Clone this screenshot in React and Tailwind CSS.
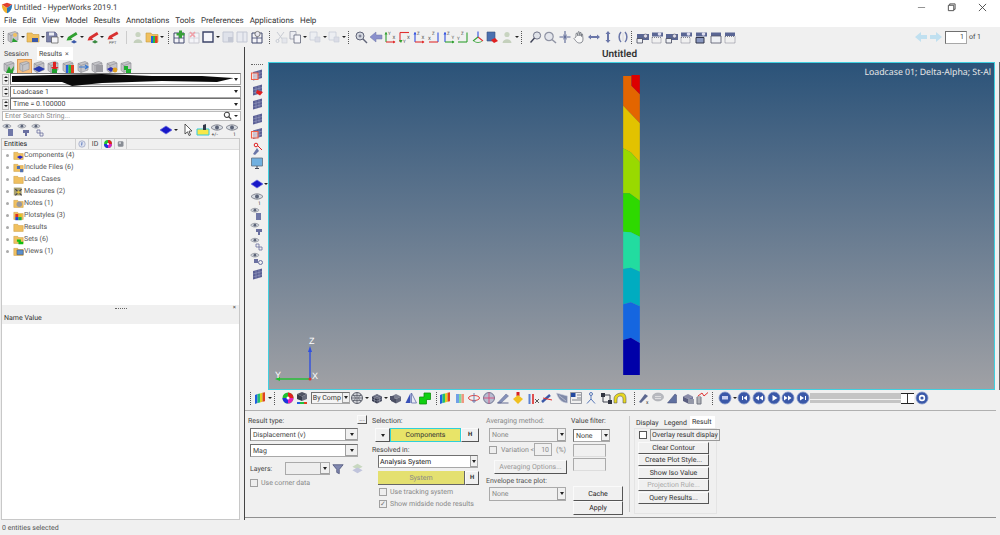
import React from "react";

const dlg = "font-['Roboto',sans-serif] text-[7px] leading-[10px] whitespace-nowrap";

const cube = (a, b, c) => (
    <>
        <path d="M7 3 12 5.5 7 8 2 5.5Z" fill={a} />
        <path d="M2 5.5 7 8V12.5L2 10Z" fill={b} />
        <path d="M12 5.5 7 8V12.5L12 10Z" fill={c} />
    </>
);
const box = (
    <>
        <path d="M2 3.5 9 1.5 12 3V10L5 12.5 2 10.5Z" fill="#c4c4c8" stroke="#8c8c92" strokeWidth=".6" />
        <path d="M5 5.5V12.5M5 5.5 12 3M5 5.5 2 3.5" stroke="#8c8c92" strokeWidth=".6" fill="none" />
    </>
);
const folder = (
    <>
        <path d="M1 3H6L7 4.5H13V12H1Z" fill="#f0c060" stroke="#c89a40" strokeWidth=".6" />
    </>
);
const eye = (
    <>
        <path d="M1 4.5C4 1 10 1 13 4.5 10 8 4 8 1 4.5Z" fill="#d8dce2" stroke="#686c78" strokeWidth=".8" />
        <circle cx="7" cy="4.5" r="2" fill="#5c6478" />
    </>
);
const sheet = (
    <>
        <path d="M3 4 12 1.5V10L3 12.5Z" fill="#5a5f94" />
        <path d="M6 3.2V11.6M9 2.4V10.8M3 7 12 4.6M3 10 12 7.6" stroke="#a2a6c8" strokeWidth=".5" />
    </>
);
const axes = (v, h, l1, l2) => (
    <>
        <path d="M3 12V2.5" stroke={v} strokeWidth="1.1" />
        <path d="M1.5 4.5 3 2 4.5 4.5Z" fill={v} />
        <path d="M3 12H12" stroke={h} strokeWidth="1.1" />
        <path d="M10 10.5 12.5 12 10 13.5Z" fill={h} />
        <text x="5" y="5" fontSize="4.5" fill="#444">{l1}</text>
        <text x="9.5" y="9" fontSize="4.5" fill="#444">{l2}</text>
    </>
);
const disc = (glyph) => (
    <>
        <circle cx="7" cy="7" r="6" fill="#3a58a8" stroke="#8094c8" strokeWidth=".8" />
        {glyph}
    </>
);
const rainbow = (
    <>
        <path d="M2 4 4.5 3V12L2 13Z" fill="#2060e0" />
        <path d="M4.5 3 7 2.4V11.4L4.5 12Z" fill="#20c070" />
        <path d="M7 2.4 9.5 1.8V10.8L7 11.4Z" fill="#e0d020" />
        <path d="M9.5 1.8 12 1.2V10.2L9.5 10.8Z" fill="#e04020" />
    </>
);

const icons = {
    model: <>{box}<path d="M7 8 12 12H6Z" fill="#28a030" /><circle cx="9" cy="5" r="2" fill="#f0c060" /></>,
    folderOpen: <>{folder}<path d="M6 8h6v4H6Z" fill="#3a58a8" /></>,
    save: <><path d="M1.5 2H10L12 4V12H1.5Z" fill="#7a80a8" stroke="#50567c" strokeWidth=".6" /><path d="M4 2.5H9V5.5H4Z" fill="#eceef4" /><path d="M6.5 7H13V13H6.5Z" fill="#f4f4f8" stroke="#555" strokeWidth=".7" /></>,
    green: <><path d="M3 7 11 2 12.5 4.5 6 8.5 7.5 10 1.5 10.5Z" fill="#30a030" /><path d="M6 12 9 10 12 12 9 13.5Z" fill="#3a58a8" /></>,
    red: <><path d="M3 7 11 2 12.5 4.5 6 8.5 7.5 10 1.5 10.5Z" fill="#d83030" /><path d="M6 12 9 10 12 12 9 13.5Z" fill="#3a8a40" /></>,
    ppt: <><path d="M3 6 11 1.5 12.5 4 6 7.5 7.5 9 1.5 9.5Z" fill="#d83030" /><text x="3" y="13.5" fontSize="4" fill="#555">PPT</text></>,
    person: <><circle cx="7" cy="4.5" r="2.6" fill="#c8d4c0" /><path d="M2.5 13C3 8 11 8 11.5 13Z" fill="#c4d0bc" /></>,
    folderRain: <>{folder}<path d="M6 6h2v7H6Z" fill="#2060e0" /><path d="M8 6h2v7H8Z" fill="#20c040" /><path d="M10 6h2.5v7H10Z" fill="#e04020" /></>,
    gridAdd: <><path d="M2 3H12V13H2Z" fill="#f4f4f8" stroke="#40486c" strokeWidth="1" /><path d="M7 3V13M2 8H12" stroke="#40486c" strokeWidth=".8" /><path d="M7 .5H10V3H12.5V5.5H10V8H7V5.5H4.5V3H7Z" fill="#38a038" /></>,
    gridDel: <><path d="M2 3H12V13H2Z" fill="#f4f4f8" stroke="#c8c8d0" strokeWidth="1" /><path d="M7 3V13M2 8H12" stroke="#d0d0d8" strokeWidth=".8" /><path d="M3 2 8 7M8 2 3 7" stroke="#f0a0a8" strokeWidth="1.6" /></>,
    frame: <path d="M2 2H12V12H2Z" fill="#f6f6fa" stroke="#3c4468" strokeWidth="1.4" />,
    gridFade: <><path d="M2 2H12V12H2Z" fill="#dfe2ea" stroke="#c4c8d4" strokeWidth="1" /><path d="M7 7H12V12H7Z" fill="#c4c8d4" /></>,
    gridFade2: <><path d="M2 2H12V12H2Z" fill="#e8eaf0" stroke="#c4c8d4" strokeWidth="1" /><path d="M8 2V12" stroke="#c4c8d4" /></>,
    gridZoom: <><path d="M2 3H12V13H2Z" fill="#f4f4f8" stroke="#40486c" strokeWidth="1" /><path d="M7 3V13M2 8H12" stroke="#40486c" strokeWidth=".8" /><circle cx="7.5" cy="4" r="2.6" fill="#e8e8f0" stroke="#666" strokeWidth=".8" /></>,
    scissors: <><path d="M3 2 9 10M10 2 4 10" stroke="#c8ccd4" strokeWidth="1" /><circle cx="3.5" cy="11" r="1.5" fill="none" stroke="#c8ccd4" /><rect x="8" y="8" width="5" height="5" fill="#e4e6ec" stroke="#c8ccd4" strokeWidth=".6" /></>,
    copy: <><path d="M2 1.5H8V9H2Z" fill="#ecedf2" stroke="#8c90a0" strokeWidth=".7" /><path d="M6 5H12.5V13H6Z" fill="#f4f4f8" stroke="#606478" strokeWidth=".8" /></>,
    copyFade: <><path d="M2 2H9V10H2Z" fill="#eceef2" stroke="#c8ccd8" strokeWidth=".8" /><path d="M7 7H12V12H7Z" fill="#dadce6" stroke="#c8ccd8" strokeWidth=".6" /></>,
    zoomBox: <><circle cx="6" cy="6" r="4" fill="#d4d8e0" stroke="#606478" strokeWidth="1" /><path d="M9 9 13 13" stroke="#606478" strokeWidth="1.5" /><path d="M4.5 6H7.5M6 4.5V7.5" stroke="#50546c" strokeWidth=".8" /></>,
    back: <path d="M7 2V5H13V9H7V12L1 7Z" fill="#8a90cc" stroke="#7078a8" strokeWidth=".5" />,
    axXY: axes("#30a030", "#e03030", "Y", "X"),
    axYX: <><path d="M2 2.5H11" stroke="#e03030" strokeWidth="1.1" /><path d="M2 2.5V12" stroke="#e03030" strokeWidth="1.1" /><path d="M1 10 3 13 4.5 10Z" fill="#30a030" /><text x="9" y="9" fontSize="4.5" fill="#444">X</text><text x="5" y="13" fontSize="4.5" fill="#444">Y</text></>,
    axZX: axes("#3050e0", "#e03030", "Z", "X"),
    axXZ: <><path d="M11 12V2.5" stroke="#3050e0" strokeWidth="1.1" /><path d="M2 12H11" stroke="#e03030" strokeWidth="1.1" /><text x="5" y="5" fontSize="4.5" fill="#444">Z</text><text x="1" y="10" fontSize="4.5" fill="#444">X</text></>,
    axZY: axes("#3050e0", "#30a030", "Z", "Y"),
    axYZ: <><path d="M11 12V2.5" stroke="#30a030" strokeWidth="1.1" /><path d="M2 12H11" stroke="#30a030" strokeWidth="1.1" /><text x="5" y="5" fontSize="4.5" fill="#444">Z</text><text x="1" y="10" fontSize="4.5" fill="#444">Y</text></>,
    axIso: <><path d="M7 7V1.5" stroke="#3050e0" strokeWidth="1.1" /><path d="M7 7 12 11" stroke="#e03030" strokeWidth="1.1" /><path d="M7 7 2 11" stroke="#30a030" strokeWidth="1.1" /><path d="M3 11C5 13 9 13 11 11" stroke="#30a030" fill="none" strokeWidth=".8" /></>,
    viewRed: <><path d="M2 2H10V11H2Z" fill="#4a70b0" stroke="#38507c" strokeWidth=".6" /><path d="M6 10 10 8 13 11 9 13Z" fill="#e02020" /></>,
    zoomDash: <><circle cx="8" cy="5.5" r="3.6" fill="#dfe2e8" stroke="#707488" strokeWidth="1" /><path d="M5.5 8 1.5 12.5" stroke="#404458" strokeWidth="1.4" /></>,
    zoomFit: <><circle cx="6" cy="6.5" r="4.2" fill="#e4e6ec" stroke="#9094a4" strokeWidth="1.2" /><path d="M9 9.5 13 13" stroke="#9094a4" strokeWidth="1.5" /></>,
    cross: <><path d="M7 1V13M1.5 7H12.5" stroke="#5a6694" strokeWidth="1.1" /><path d="M5 4.5C7 6 7 8 5 9.5M9 4.5C7 6 7 8 9 9.5" stroke="#5a6694" fill="none" strokeWidth=".8" /></>,
    hand: <path d="M4 7V3.5L5 3 6 6V2L7 1.5 8 6V2.5L9 2.5 9.5 6.5V4L10.5 4 11 9C11 12 9.5 13 7.5 13 5.5 13 4.5 12 2 8.5L3 7.5Z" fill="#f8f8f8" stroke="#70747c" strokeWidth=".8" />,
    arrowH: <path d="M1 7 4 4.5V6H10V4.5L13 7 10 9.5V8H4V9.5Z" fill="#6a76a8" />,
    arrowV: <path d="M7 1 9.5 4H8V10H9.5L7 13 4.5 10H6V4H4.5Z" fill="#6a76a8" />,
    rotate: <><path d="M5 2C2.5 4.5 2.5 9.5 5 12" fill="none" stroke="#6a76a8" strokeWidth="1.5" /><path d="M9 2C11.5 4.5 11.5 9.5 9 12" fill="none" stroke="#6a76a8" strokeWidth="1.5" /><path d="M7 3V11" stroke="#d8d8e0" /></>,
    cam: <><path d="M1 4H13V10H1Z" fill="#5a6694" /><circle cx="9.5" cy="6" r="2" fill="#dde" stroke="#445" strokeWidth=".5" /><path d="M1 8.5H6.5V13H1Z" fill="#eef0f4" stroke="#404458" strokeWidth=".8" /></>,
    camDash: <><path d="M2 2.5H13V6.5H2Z" fill="#5a6694" /><circle cx="9.5" cy="4" r="1.8" fill="#dde" /><path d="M2 7.5H11V13H2Z" fill="none" stroke="#505468" strokeWidth=".7" strokeDasharray="1 1" /></>,
    camDark: <><path d="M2 2.5H13V6.5H2Z" fill="#5a6694" /><circle cx="9.5" cy="4" r="1.8" fill="#dde" /><path d="M2 7.5H10V13H2Z" fill="#8a98c0" stroke="#303448" strokeWidth="1" /></>,
    clap: <><path d="M2 2.5H12V6H2Z" fill="#5a6694" /><path d="M2 6H12V13H2Z" fill="#eef0f4" stroke="#505468" strokeWidth=".8" /></>,
    clapDash: <><path d="M2 2.5H12V6H2Z" fill="#5a6694" /><path d="M2 6.5H12V13H2Z" fill="none" stroke="#505468" strokeWidth=".7" strokeDasharray="1 1" /></>,
    eyePM: <>{eye}<text x="1.5" y="13" fontSize="5" fill="#333">+/-</text></>,
    eyeOne: <>{eye}<text x="8" y="13" fontSize="5" fill="#333">1</text></>,
    eyeA: <><g transform="scale(.7)">{eye}</g><rect x="6" y="6" width="5" height="7" fill="#7078a8" /></>,
    eyeB: <><g transform="scale(.7)">{eye}</g><path d="M6 7H12V10H10V13H8V10H6Z" fill="#6a70a0" /></>,
    eyeC: <><g transform="scale(.7)">{eye}</g><path d="M6 7H9V10H6ZM9 10H12V13H9Z" fill="none" stroke="#6a70a0" strokeWidth=".8" /></>,
    eyeD: <><g transform="scale(.7)">{eye}</g><rect x="4" y="7" width="4" height="4" fill="#6a70a0" /><circle cx="10.5" cy="10.5" r="2" fill="none" stroke="#6a70a0" /></>,
    blueCube: <path d="M7 3 13 7 7 11 1 7Z" fill="#1818c8" stroke="#6868e0" strokeWidth=".7" />,
    cursor: <path d="M4 1V11L6.5 8.8 8 12.5 9.5 12 8 8.2 11 8Z" fill="#fff" stroke="#333" strokeWidth=".8" />,
    paint: <><path d="M1 6H13V12H1Z" fill="#f8e848" stroke="#30c8e0" strokeWidth="1" /><path d="M7 2 10 1V7H7Z" fill="#303848" /></>,
    info: <><circle cx="7" cy="7" r="4.5" fill="#dfe4f0" stroke="#98a0c0" /><path d="M7 4.5 6.5 9" stroke="#4060b0" strokeWidth="1.2" /></>,
    wheel: <><circle cx="7" cy="7" r="5.5" fill="#20c030" /><path d="M7 7V1.5A5.5 5.5 0 0 1 12.5 7Z" fill="#e02020" /><path d="M7 7H12.5A5.5 5.5 0 0 1 7 12.5Z" fill="#e020c0" /><path d="M7 7V12.5A5.5 5.5 0 0 1 1.5 7Z" fill="#2030e0" /><circle cx="7" cy="7" r="1.5" fill="#fff" /></>,
    grayBall: <><rect x="2.5" y="3" width="8" height="8" rx="2" fill="#888c94" /><rect x="4" y="4" width="3" height="3" fill="#c4c8cc" /></>,
    tFolderBlue: <>{folder}<path d="M5 9 9 7 13 9 9 11.5Z" fill="#2020c8" /></>,
    tFolderFile: <>{folder}<path d="M5 5H9V9H5ZM9 9H13V13H9Z" fill="#5070b0" /></>,
    tFolder: folder,
    tFolderMeas: <><path d="M1 2H11V12H1Z" fill="#a8a070" /><path d="M3 4 11 12M11 4 3 12" stroke="#404050" strokeWidth="1.4" /><circle cx="7" cy="8" r="2" fill="#e0c040" /></>,
    tFolderNote: <>{folder}<circle cx="8" cy="8" r="3.5" fill="#98989c" /></>,
    tFolderPlot: <>{folder}<path d="M3 5H7V9H3Z" fill="#e03020" /><path d="M7 5H11V9H7Z" fill="#e0c020" /><path d="M3 9H7V13H3Z" fill="#2040d0" /><path d="M7 9H11V13H7Z" fill="#20b040" /></>,
    tFolderSet: <>{folder}<path d="M5 7H10V10H13V13H7V10H5Z" fill="#10c010" /></>,
    tFolderView: <>{folder}<path d="M5 5H13V11H5Z" fill="#5a90d0" stroke="#404858" strokeWidth=".6" /></>,
    monitor: <><path d="M1.5 2H12.5V10H1.5Z" fill="#70b0e0" stroke="#607080" strokeWidth=".8" /><path d="M5 12H9V13H5Z" fill="#404858" /><path d="M6.5 10H7.5V12H6.5Z" fill="#404858" /></>,
    sheetRed: <>{sheet}<path d="M7 7 13 9 10 12.5 6 10Z" fill="#e02020" /></>,
    sheetBox: <>{sheet}<path d="M1.5 5H8V11.5H1.5Z" fill="#f8e8e4" fillOpacity=".7" stroke="#f06048" strokeWidth="1.1" /></>,
    sheet,
    jump: <><path d="M3 12 7 6 9 9 5 13Z" fill="#6a76a8" /><circle cx="6" cy="3" r="1.8" fill="none" stroke="#e02020" /><path d="M8 4 12 8" stroke="#e02020" /></>,
    boxGreen: <>{box}<path d="M4 13 7 6 9 10 12 6 11 13Z" fill="#28a030" /></>,
    boxActive: box,
    boxBlue: <>{box}<path d="M7 6 13 9 7 12 1 9Z" fill="#2a3cb0" /></>,
    boxRed: <>{box}<path d="M7 2 10 2 10 7H12.5L8.5 11 5 7H7Z" fill="#e02020" /><path d="M6 9H11V13H6Z" fill="#20a030" /></>,
    boxRain: <>{box}<path d="M5 5H7.5V13H5Z" fill="#2060e0" /><path d="M7.5 5H10V13H7.5Z" fill="#20c040" /><path d="M10 5H13V13H10Z" fill="#e04020" /></>,
    boxFlow: <>{box}<path d="M3 7H12M9 5 12 7 9 9" stroke="#3878d0" fill="none" strokeWidth="1.2" /></>,
    boxGray: <>{box}<path d="M6 5H13V12H6Z" fill="#9c9ca2" /></>,
    boxMix: <>{box}<path d="M2 9 6 7 9 9 6 12Z" fill="#3030b0" /><circle cx="10" cy="10" r="2.4" fill="#e0a020" /></>,
    boxSets: <>{box}<path d="M5 6H9V9H12V13H7V10H5Z" fill="#20b030" /></>,
    rainbow,
    cubeRain: <><path d="M2 3 7 1 12 3 7 5.5Z" fill="#505464" /><path d="M2 3V8L7 10V5.5Z" fill="#383c4c" /><path d="M12 3V8L7 10V5.5Z" fill="#686c7c" /><path d="M2 11H5V13H2Z" fill="#2060e0" /><path d="M5 11H9V13H5Z" fill="#20c040" /><path d="M9 11H12V13H9Z" fill="#e04020" /></>,
    meshBall: <><circle cx="7" cy="7" r="5.5" fill="#d0d2d8" stroke="#404450" strokeWidth=".8" /><path d="M1.5 7H12.5M7 1.5V12.5M3 3.5C6 6 6 8 3 10.5M11 3.5C8 6 8 8 11 10.5M2.5 4.5H11.5M2.5 9.5H11.5" stroke="#404450" strokeWidth=".6" fill="none" /></>,
    meshCube: <>{cube("#606478", "#383c50", "#505468")}<path d="M4.5 4.3 9.5 6.8M9.5 4.3 4.5 6.8M4.5 6.8V11.3M9.5 6.8V11.3M2 7.8 7 10.2 12 7.8" stroke="#b4b8c8" strokeWidth=".4" fill="none" /></>,
    grayCubes: <>{cube("#7a7e90", "#4a4e62", "#62667a")}<path d="M1 5H5V9H1Z" fill="#50546a" /></>,
    halves: <><path d="M6.5 2V12H1.5Z" fill="#3850b8" /><path d="M7.5 2V12H12.5Z" fill="#e8eaf4" stroke="#5060a0" strokeWidth=".7" /></>,
    greenCubes: <path d="M1.5 6H6V2H12.5V8.5H8.5V13H1.5Z" fill="#10d010" stroke="#10900e" strokeWidth=".8" />,
    rainFade: <><path d="M3 3H6V12H3Z" fill="#70a0e8" /><path d="M6 3H8.5V12H6Z" fill="#80dca0" /><path d="M8.5 3H11V12H8.5Z" fill="#f09880" /></>,
    ringRed: <><ellipse cx="7" cy="7" rx="5.5" ry="2.5" fill="none" stroke="#e04040" /><path d="M7 2V12" stroke="#7080b0" /><path d="M5 10H9" stroke="#7080b0" /></>,
    ballGrid: <><circle cx="7" cy="7" r="5.5" fill="#b8bcd0" stroke="#5a6080" strokeWidth=".8" /><path d="M1.5 7H12.5M7 1.5V12.5" stroke="#e04070" strokeWidth=".8" /></>,
    ramp: <><path d="M1.5 12 10 3 12.5 5 5 12Z" fill="#8490b8" stroke="#606890" strokeWidth=".5" /><path d="M1.5 12H12.5" stroke="#606890" /></>,
    hazard: <><path d="M5.5 1H8.5V5H5.5Z" fill="#d82020" /><path d="M2 8 7 4 12 8 7 13Z" fill="#f0c020" /></>,
    bars: <><path d="M2.5 3H4.5V13H2.5Z" fill="#5a80d0" /><path d="M6 3H8V13H6Z" fill="#e05050" /><path d="M9 8 13 12M13 8 9 12" stroke="#333" strokeWidth=".8" /></>,
    cutArrows: <><path d="M2 11 10 4" stroke="#3a58a8" strokeWidth="2.4" /><path d="M3 7 12 9" stroke="#e03030" strokeWidth="1" /></>,
    stripe: <path d="M1.5 2 12.5 5V12C7 12 3 8 1.5 2ZM4 4.5 11 10" fill="#808aa8" stroke="#d0d4e0" strokeWidth=".6" />,
    panelWin: <><path d="M1.5 1.5H12.5V12.5H1.5Z" fill="#f0f0f0" stroke="#707480" strokeWidth=".7" /><path d="M2 2H6.5V6H2Z" fill="#2048a0" /><path d="M8 4H12M8 7H12M3 9H12" stroke="#80848c" /></>,
    stick: <><circle cx="7" cy="3" r="1.5" fill="none" stroke="#5878b8" /><path d="M7 4.5V8L3 12.5M7 8 11 12.5" stroke="#5878b8" fill="none" /></>,
    nodes: <><path d="M4 4H11V11H4Z" fill="none" stroke="#404450" /><rect x="2" y="2" width="4" height="4" fill="#303440" /><rect x="9" y="9" width="4" height="4" fill="#303440" /></>,
    arc: <path d="M1 12V8C1 4 5 2 9 2 12 2 13 5 13 8V12H10V8C10 6 9 5 7 5 5 5 4 7 4 9V12Z" fill="#e8d820" stroke="#404450" strokeWidth=".5" />,
    pen: <><path d="M2 11 8 3 11 5 4 12Z" fill="#5c6890" /><text x="9" y="13" fontSize="5" fill="#333">x</text></>,
    bubble: <><ellipse cx="7" cy="6" rx="5.5" ry="4" fill="#b8bac0" stroke="#9a9ca2" strokeWidth=".5" /><path d="M4 5.5H10M4 7.5H10" stroke="#eee" strokeWidth=".7" /></>,
    shoe: <path d="M1.5 12 9 3 10.5 4 10.5 12Z" fill="#6070a0" stroke="#404870" strokeWidth=".5" />,
    cubeDoc: <>{cube("#8a8ca8", "#5a5e80", "#70749a")}<path d="M7 8H13V13H7Z" fill="#9498a8" /></>,
    trend: <><path d="M2 6H6V13H2Z" fill="none" stroke="#707480" /><path d="M3 7V13M5 7V13" stroke="#707480" /><path d="M3 5 7 2 9 5 13 1.5" stroke="#e03030" fill="none" /></>,
    msg: disc(<path d="M4 5H10V8.5H4Z" fill="#c8d0f0" />),
    first: disc(<path d="M5 5H6V9H5ZM10 4.5V9.5L6.5 7Z" fill="#fff" />),
    prev: disc(<path d="M7 4.5V9.5L3.5 7ZM11 4.5V9.5L7.5 7Z" fill="#fff" />),
    play: disc(<path d="M5.5 4V10L10.5 7Z" fill="#fff" />),
    next: disc(<path d="M7 4.5V9.5L10.5 7ZM3 4.5V9.5L6.5 7Z" fill="#fff" />),
    last: disc(<path d="M9 5H10V9H9ZM4 4.5V9.5L8 7Z" fill="#fff" />),
    gear: disc(<circle cx="7" cy="7" r="2.4" fill="none" stroke="#fff" strokeWidth="1.6" />),
    funnel: <path d="M1 2H13L8.5 7.5V12.5L5.5 11V7.5Z" fill="#8088b0" stroke="#404870" strokeWidth=".8" />,
    layersFade: <><path d="M7 2 12.5 5 7 8 1.5 5Z" fill="#c8d8c0" /><path d="M7 6 12.5 9 7 12 1.5 9Z" fill="#c0c4dc" /></>,
    navL: <path d="M7 2V5H13V9H7V12L1 7Z" fill="#c0e0f0" />,
    navR: <path d="M7 2V5H1V9H7V12L13 7Z" fill="#c0e0f0" />,
};

const Svg = ({ n, className = "w-[14px] h-[14px]" }) => (
    <svg viewBox="0 0 14 14" className={className}>{icons[n]}</svg>
);

const Caret = () => <span className="w-0 h-0 mx-[1px] border-x-[2px] border-x-transparent border-t-[2px] border-t-[#222]" />;

// one toolbar button, a drop arrow is optional
const T = ({ n, a, className = "" }) => (
    <span className={`flex items-center shrink-0 ${className}`}>
        <span className="w-[14.6px] flex justify-center"><Svg n={n} /></span>
        {a && <span className="w-[5px] flex justify-center"><Caret /></span>}
    </span>
);

const Grip = ({ className = "" }) => (
    <span className={`shrink-0 w-[1px] h-[13px] border-l border-dotted border-[#555] ${className}`} />
);

const GripH = () => <span className="w-[12px] h-[1px] border-t border-dotted border-[#666]" />;

const Sunken = ({ className = "", children }) => (
    <div className={`flex items-center bg-white border border-[#a8a8a8] border-t-[#707070] border-l-[#707070] ${className}`}>{children}</div>
);

const DropBtn = ({ className = "" }) => (
    <span className={`ml-auto self-stretch flex items-center justify-center bg-[#f0f0f0] border-l border-b border-[#a0a0a0] ${className}`}>
        <span className="w-0 h-0 border-x-[2.5px] border-x-transparent border-t-[3px] border-t-[#222]" />
    </span>
);

const Raised = ({ className = "", children }) => (
    <div className={`flex items-center justify-center bg-[#f0f0f0] border-t border-l border-[#fafafa] border-r border-b border-r-[#555] border-b-[#555] ${dlg} ${className}`}>{children}</div>
);

const Check = ({ on, dim }) => (
    <span className={`shrink-0 w-[8px] h-[8px] border flex items-center justify-center text-[7px] leading-none ${dim ? "border-[#a0a0a0] bg-[#eee] text-[#777]" : "border-[#555] bg-white text-[#222]"}`}>{on ? "✓" : ""}</span>
);

const Spin = () => (
    <span className="shrink-0 w-[7px] h-[11px] flex flex-col items-center justify-around bg-[#f0f0f0] border border-[#bbb]">
        <span className="w-0 h-0 border-x-[2px] border-x-transparent border-b-[2px] border-b-[#222]" />
        <span className="w-0 h-0 border-x-[2px] border-x-transparent border-t-[2px] border-t-[#222]" />
    </span>
);

const tree = [
    ["tFolderBlue", "Components (4)"],
    ["tFolderFile", "Include Files (6)"],
    ["tFolder", "Load Cases"],
    ["tFolderMeas", "Measures (2)"],
    ["tFolderNote", "Notes (1)"],
    ["tFolderPlot", "Plotstyles (3)"],
    ["tFolder", "Results"],
    ["tFolderSet", "Sets (6)"],
    ["tFolderView", "Views (1)"],
];

const menu = ["File", "Edit", "View", "Model", "Results", "Annotations", "Tools", "Preferences", "Applications", "Help"];

const LeftPanel = () => (
    <div className={`w-[241px] shrink-0 flex flex-col text-[#444] ${dlg}`}>
        <div className="h-[13px] flex items-end pl-[2px]">
            <span className="px-[2px] w-[33px] h-[12px] flex items-center">Session</span>
            <span className="ml-[2px] px-[2px] h-[13px] w-[36px] flex items-center gap-[3px] bg-white">Results <span className="text-[#333]">×</span></span>
        </div>
        <div className="h-[13px] flex items-center pl-[2px]">
            <T n="boxGreen" />
            <span className="flex bg-[#f8c080] border border-[#e09850]"><Svg n="boxActive" className="w-[13px] h-[13px]" /></span>
            <T n="boxBlue" />
            <T n="boxRed" />
            <T n="boxRain" />
            <T n="boxFlow" />
            <T n="boxGray" />
            <T n="boxMix" />
            <T n="boxSets" />
        </div>
        <div className="flex flex-col gap-[0.5px] pl-[2px]">
            <div className="h-[12px] flex items-center gap-[1px] relative">
                <Spin />
                <Sunken className="flex-1 h-[12px]"><DropBtn className="w-[9px] !border-0 bg-white" /></Sunken>
                <svg viewBox="0 0 220 14" className="absolute left-[9px] top-[-1px] w-[222px] h-[14px]">
                    <path d="M0 4 40 3 90 2 140 4 190 4 222 6 205 10 150 9 90 11 60 14 50 10 0 10Z" fill="#0a0a0a" />
                </svg>
            </div>
            <div className="h-[12px] flex items-center gap-[1px]">
                <Spin />
                <Sunken className="flex-1 h-[12px] pl-[2px]">Loadcase 1<DropBtn className="w-[9px] !border-0 bg-white" /></Sunken>
            </div>
            <div className="h-[12px] flex items-center gap-[1px]">
                <Spin />
                <Sunken className="flex-1 h-[12px] pl-[2px]">Time = 0.100000<DropBtn className="w-[9px] !border-0 bg-white" /></Sunken>
            </div>
            <Sunken className="h-[10.5px] pl-[2px] text-[#888] !border-[#bbb]">
                Enter Search String...
                <svg viewBox="0 0 14 14" className="ml-auto w-[9px] h-[9px]"><circle cx="6" cy="6" r="4" fill="none" stroke="#444" strokeWidth="1.6" /><path d="M9 9 13 13" stroke="#444" strokeWidth="2" /></svg>
                <span className="w-[8px] flex justify-center"><Caret /></span>
            </Sunken>
        </div>
        <div className="h-[17px] flex items-center pl-[2px] pr-[2px]">
            <T n="eyeA" /><T n="eyeB" /><T n="eyeC" />
            <T n="blueCube" a className="ml-auto" />
            <T n="cursor" className="ml-[2px]" />
            <T n="paint" />
            <T n="eyePM" />
            <T n="eyeOne" />
        </div>
        <div className="flex-1 flex flex-col border border-[#c8c8c8] mx-[1px] bg-white">
            <div className="h-[11px] flex items-center bg-[#f0f0f0] border-b border-[#ddd]">
                <span className="w-[73px] pl-[2px] text-[#222]">Entities</span>
                <span className="w-[13px] h-full border-l border-[#d0d0d0] flex items-center justify-center"><Svg n="info" className="w-[10px] h-[10px]" /></span>
                <span className="w-[13px] h-full border-l border-[#d0d0d0] flex items-center justify-center">ID</span>
                <span className="w-[13px] h-full border-l border-[#d0d0d0] flex items-center justify-center"><Svg n="wheel" className="w-[10px] h-[10px]" /></span>
                <span className="w-[13px] h-full border-x border-[#d0d0d0] flex items-center justify-center"><Svg n="grayBall" className="w-[10px] h-[10px]" /></span>
            </div>
            <div className="h-[156px] -mt-[1px] flex flex-col">
                {tree.map(([ic, label]) => (
                    <div key={label} className="h-[12px] flex items-center">
                        <span className="w-[3px] h-[3px] ml-[4px] mr-[4px] bg-[#aaa] rounded-full" />
                        <Svg n={ic} className="w-[11px] h-[11px]" />
                        <span className="text-[#555]">{label}</span>
                    </div>
                ))}
            </div>
            <div className="h-[6px] flex items-center justify-center relative bg-[#f0f0f0]">
                <GripH />
                <span className="absolute right-[3px] text-[6px] leading-none">×</span>
            </div>
            <div className="h-[13px] flex items-center pl-[2px] bg-[#f0f0f0] text-[#333]">Name Value</div>
            <div className="flex-1 bg-white" />
        </div>
    </div>
);

const VerticalTools = () => (
    <div className="w-[23px] shrink-0 flex flex-col items-center pt-[2px]">
        <GripH />
        <div className="flex flex-col mt-[3px] gap-[0.5px]">
            <Svg n="sheetBox" />
            <Svg n="sheetRed" />
            <Svg n="sheet" />
            <Svg n="sheet" />
            <Svg n="sheetBox" className="w-[14px] h-[15px]" />
            <Svg n="jump" />
            <Svg n="monitor" />
        </div>
        <div className="mt-[4px] mb-[3px]"><GripH /></div>
        <div className="flex flex-col items-center gap-[1px]">
            <T n="blueCube" a className="ml-[5px]" />
            <Svg n="eyeOne" />
            <Svg n="eyeA" />
            <Svg n="eyeB" />
            <Svg n="eyeC" />
            <Svg n="eyeD" />
            <Svg n="sheet" />
        </div>
    </div>
);

const Beam = () => (
    <svg viewBox="99 30 50 900" className="w-[17px] h-[300px] shrink-0">
        <path d="M99 33H124V62L149 88V175L99 122Z" fill="#e36500" />
        <path d="M124 30H149V88L124 62Z" fill="#dd0000" />
        <path d="M99 122 149 175V292L122 262 99 250Z" fill="#e2c200" />
        <path d="M99 250 122 262 149 292V407L118 385H99Z" fill="#99d900" />
        <path d="M99 385H118L149 407V515L122 502 99 500Z" fill="#2ed900" />
        <path d="M99 500 122 502 149 515V620L122 608 99 612Z" fill="#22dca0" />
        <path d="M99 612 122 608 149 620V724L122 712 99 718Z" fill="#00acc0" />
        <path d="M99 718 122 712 149 724V834L122 818 99 825Z" fill="#1566e0" />
        <path d="M99 825 122 818 149 834V930H99Z" fill="#0000a8" />
    </svg>
);

const Triad = () => (
    <div className="absolute left-[3px] bottom-[4px] w-[46px] h-[48px]">
        <svg viewBox="0 0 46 48" className="absolute inset-0 w-full h-full">
            <path d="M38 42V13" stroke="#3050e0" strokeWidth="1.4" />
            <path d="M36 15 38 9 40 15Z" fill="#3050e0" />
            <path d="M38 42H6" stroke="#20c030" strokeWidth="1.4" />
            <path d="M8 40 3 42 8 44Z" fill="#20c030" />
            <circle cx="38" cy="42" r="1.5" fill="#e03030" />
        </svg>
        <span className="absolute left-[37px] top-[-1px] text-[9px] leading-[10px] text-white font-['Liberation_Sans',sans-serif]">Z</span>
        <span className="absolute left-[3px] top-[33px] text-[9px] leading-[10px] text-white font-['Liberation_Sans',sans-serif]">Y</span>
        <span className="absolute left-[40px] top-[34px] text-[9px] leading-[10px] text-white font-['Liberation_Sans',sans-serif]">X</span>
    </div>
);

const BottomTools = () => (
    <div className="h-[16px] flex items-center pl-[5px]">
        <Grip /><T n="rainbow" a className="ml-[2px]" />
        <Grip className="ml-[1px]" />
        <T n="wheel" className="ml-[6px]" /><T n="cubeRain" className="mr-[1px]" />
        <Sunken className={`w-[39px] h-[12px] pl-[1px] text-[#333] !bg-[#f4f4f4] ${dlg}`}>By Comp<DropBtn className="w-[7px]" /></Sunken>
        <T n="meshBall" a /><T n="meshCube" a /><T n="grayCubes" /><T n="halves" /><T n="greenCubes" />
        <Grip className="ml-[3px] mr-[1px]" />
        <T n="rainbow" /><T n="rainFade" /><T n="ringRed" /><T n="ballGrid" /><T n="ramp" /><T n="hazard" /><T n="bars" /><T n="cutArrows" /><T n="stripe" /><T n="panelWin" /><T n="stick" /><T n="nodes" /><T n="arc" />
        <Grip className="ml-[7px] mr-[1px]" />
        <T n="pen" /><T n="bubble" /><T n="shoe" /><T n="cubeDoc" /><T n="trend" />
        <Grip className="ml-[3px] mr-[4px]" />
        <T n="msg" a /><T n="first" /><T n="prev" /><T n="play" /><T n="next" /><T n="last" />
        <div className="w-[104px] h-[11px] flex flex-col gap-[1px] relative">
            <div className="h-[6px] bg-[#c4c4c4]" />
            <div className="h-[3px] bg-[#c4c4c4]" />
            <div className="absolute right-0 top-0 w-[13px] h-[11px] border-y border-[#222] bg-white">
                <div className="ml-[6px] w-[1px] h-full bg-[#333]" />
            </div>
        </div>
        <T n="gear" className="ml-[1px]" />
    </div>
);

const ResultForm = () => (
    <div className={`flex-1 flex text-[#444] border-y border-y-[#b0b0b0] ${dlg} border-b-[#909090]`}>
        {/* result type */}
        <div className="w-[127px] shrink-0 pl-[3px] pt-[5px] flex flex-col">
            <div className="h-[10px] flex items-center justify-between pr-[5px]">
                <span>Result type:</span>
                <Raised className="w-[10px] h-[9px] -translate-y-[2px]">...</Raised>
            </div>
            <Sunken className="ml-[2px] w-[108px] h-[13px] mt-[2px] pl-[2px]">Displacement (v)<DropBtn className="w-[12px]" /></Sunken>
            <Sunken className="ml-[2px] w-[108px] h-[13px] mt-[3px] pl-[2px]">Mag<DropBtn className="w-[12px]" /></Sunken>
            <div className="flex items-center mt-[5px] h-[13px]">
                <span className="w-[37px] pl-[2px]">Layers:</span>
                <Sunken className="w-[45px] h-[13px] !bg-[#eee] !border-[#aaa]"><DropBtn className="w-[9px]" /></Sunken>
                <Svg n="funnel" className="w-[12px] h-[12px] ml-[2px]" />
                <Svg n="layersFade" className="w-[13px] h-[13px] ml-[7px]" />
            </div>
            <div className="flex items-center gap-[3px] mt-[3px] pl-[2px] text-[#888]"><Check dim />Use corner data</div>
        </div>
        {/* selection */}
        <div className="w-[114px] shrink-0 pt-[5px] flex flex-col">
            <span className="h-[10px]">Selection:</span>
            <div className="flex h-[14px] mt-[2px] ml-[3px] w-[104px]">
                <Raised className="w-[15px]"><span className="w-0 h-0 border-x-[2.5px] border-x-transparent border-t-[3px] border-t-[#222]" /></Raised>
                <div className={`w-[71px] flex items-center justify-center bg-[#e8e468] border border-[#30d0d8] text-[#333] ${dlg}`}>Components</div>
                <Raised className="w-[18px] !text-[6px] font-bold text-[#222]">H</Raised>
            </div>
            <span className="mt-[3px] h-[10px]">Resolved in:</span>
            <Sunken className="ml-[6px] w-[100px] h-[13px] pl-[1px] text-[#222]">Analysis System<DropBtn className="w-[7px]" /></Sunken>
            <div className="flex h-[14px] ml-[6px] mt-[3px] w-[101px]">
                <div className="w-[87px] flex items-center justify-center bg-[#e4e070] border-b border-r border-[#666] text-[#888]">System</div>
                <Raised className="w-[14px] !text-[6px] font-bold text-[#333]">H</Raised>
            </div>
            <div className="flex items-center gap-[3px] ml-[7px] mt-[2px] text-[#888]"><Check dim />Use tracking system</div>
            <div className="flex items-center gap-[3px] ml-[7px] mt-[2px] text-[#888]"><Check dim on />Show midside node results</div>
        </div>
        {/* averaging */}
        <div className="w-[85px] shrink-0 pt-[5px] flex flex-col text-[#888]">
            <span className="h-[10px]">Averaging method:</span>
            <Sunken className="ml-[3px] w-[77px] h-[14px] mt-[2px] pl-[2px] !bg-[#f0f0f0] !border-[#aaa]">None<DropBtn className="w-[8px]" /></Sunken>
            <div className="flex items-center mt-[1px] ml-[3px] h-[13px]">
                <Check dim /><span className="ml-[4px] w-[32px]">Variation &lt;</span>
                <Sunken className="ml-[1px] w-[18px] h-[13px] justify-end pr-[2px] !bg-[#f0f0f0] !border-[#aaa]">10</Sunken>
                <span className="ml-[4px]">(%)</span>
            </div>
            <Raised className="ml-[8px] w-[73px] h-[14px] mt-[4px] !text-[#999]">Averaging Options...</Raised>
            <span className="mt-[2px] h-[10px] text-[#555]">Envelope trace plot:</span>
            <Sunken className="ml-[3px] w-[77px] h-[14px] mt-[1px] pl-[2px] !bg-[#f0f0f0] !border-[#aaa]">None<DropBtn className="w-[8px]" /></Sunken>
        </div>
        {/* value filter */}
        <div className="w-[56px] shrink-0 pt-[5px] flex flex-col">
            <span className="h-[10px]">Value filter:</span>
            <Sunken className="ml-[2px] w-[37px] h-[13px] mt-[3px] pl-[2px]">None<DropBtn className="w-[8px]" /></Sunken>
            <div className="ml-[2px] w-[33px] h-[13px] mt-[2px] border border-[#aaa] border-b-[#ddd]" />
            <div className="ml-[2px] w-[33px] h-[13px] mt-[1px] border border-[#aaa] border-b-[#ddd]" />
            <Raised className="ml-[2px] w-[50px] h-[15px] mt-[15px] !text-[#222]">Cache</Raised>
            <Raised className="ml-[2px] w-[50px] h-[14px] !text-[#222]">Apply</Raised>
        </div>
        {/* tabs */}
        <div className="ml-[2px] w-[1px] my-[5px] bg-[#c8c8c8]" />
        <div className="ml-[4px] w-[83px] pt-[5px] flex flex-col">
            <div className="h-[12px] flex items-end text-[#333]">
                <span className="w-[28px] pl-[2px] h-[11px] flex items-center">Display</span>
                <span className="w-[28px] pl-[2px] h-[11px] flex items-center">Legend</span>
                <span className="w-[25px] pl-[2px] h-[12px] flex items-center bg-white">Result</span>
            </div>
            <div className="h-[86px] border border-[#e4e4e4] pt-[1px] px-[3px] flex flex-col gap-[0.5px]">
                <div className="h-[10px] flex items-center gap-[3px] ml-[1px] text-[#333]">
                    <Check /><span className="border border-[#999] px-[1px]">Overlay result display</span>
                </div>
                <Raised className="w-[71px] h-[12px] mt-[1px] !text-[#333]">Clear Contour</Raised>
                <Raised className="w-[71px] h-[12px] !text-[#333]">Create Plot Style...</Raised>
                <Raised className="w-[71px] h-[12px] !text-[#333]">Show Iso Value</Raised>
                <Raised className="w-[71px] h-[12px] !text-[#aaa]">Projection Rule...</Raised>
                <Raised className="w-[71px] h-[12px] !text-[#333]">Query Results...</Raised>
            </div>
        </div>
    </div>
);

export default function App() {
    return (
        <div className="w-[1000px] h-[535px] flex flex-col bg-[#f0f0f0] overflow-hidden font-['Roboto',sans-serif] [text-rendering:geometricPrecision]">
            <div className="h-[15px] shrink-0 bg-white flex items-center pl-[1px]">
                <svg viewBox="0 0 14 14" className="w-[12px] h-[12px]">
                    <path d="M1 3 7 1 13 3 7 7Z" fill="#e04030" />
                    <path d="M1 3 7 7V13C3 12 1 8 1 3Z" fill="#f0b030" />
                    <path d="M13 3 7 7V13C11 12 13 8 13 3Z" fill="#2878b8" />
                </svg>
                <span className="ml-[1px] text-[8px] leading-[15px] text-[#444]">Untitled - HyperWorks 2019.1</span>
                <div className="ml-auto flex items-center h-full">
                    <svg viewBox="0 0 10 10" className="w-[9px] h-[9px] mr-[21px]"><path d="M1 5H9" stroke="#888" /></svg>
                    <svg viewBox="0 0 10 10" className="w-[9px] h-[9px] mr-[22px]"><path d="M1.5 2.5H7.5V8.5H1.5ZM3 2.5V1H9V7H7.5" fill="none" stroke="#444" /></svg>
                    <svg viewBox="0 0 10 10" className="w-[9px] h-[9px] mr-[13px]"><path d="M1 1 9 9M9 1 1 9" stroke="#444" /></svg>
                </div>
            </div>
            <div className="h-[12px] shrink-0 bg-white flex items-center gap-[6px] pl-[4px] text-[8px] leading-[12px] text-[#333]">
                {menu.map(m => <span key={m}>{m}</span>)}
            </div>
            <div className="h-[20px] shrink-0 flex items-center pl-[3px]">
                <Grip />
                <T n="model" a className="ml-[2px]" />
                <T n="folderOpen" a /><T n="save" a /><T n="green" a /><T n="red" a className="ml-[1px]" /><T n="ppt" className="ml-[1px]" />
                <Grip className="ml-[5px] !border-solid !border-[#ccc]" />
                <T n="person" className="ml-[4px]" />
                <T n="folderRain" a />
                <Grip className="ml-[3px] mr-[3px]" />
                <T n="gridAdd" /><T n="gridDel" /><T n="frame" a /><T n="gridFade" /><T n="gridFade2" /><T n="gridZoom" />
                <Grip className="ml-[5px] mr-[3px]" />
                <T n="scissors" /><T n="copy" a /><T n="copyFade" a /><T n="copyFade" a />
                <Grip className="ml-[1px] mr-[5px]" />
                <T n="zoomBox" /><T n="back" /><T n="axXY" /><T n="axYX" /><T n="axZX" /><T n="axXZ" /><T n="axZY" /><T n="axYZ" /><T n="axIso" /><T n="viewRed" /><T n="person" a />
                <Grip className="ml-[2px] mr-[6px]" />
                <T n="zoomDash" /><T n="zoomFit" /><T n="cross" /><T n="hand" /><T n="arrowH" /><T n="arrowV" /><T n="rotate" />
                <Grip className="ml-[1px] mr-[3px]" />
                <T n="cam" /><T n="camDash" /><T n="cam" /><T n="camDash" /><T n="camDark" /><T n="clap" /><T n="clapDash" />
                <div className={`ml-auto mr-[19px] flex items-center gap-[1px] text-[#444] ${dlg}`}>
                    <Svg n="navL" /><Svg n="navR" />
                    <Sunken className="w-[22px] h-[13px] justify-end pr-[2px] ml-[1px]">1</Sunken>
                    <span className="ml-[1px]">of 1</span>
                </div>
            </div>
            <div className="flex-1 min-h-0 flex">
                <LeftPanel />
                <div className="w-[3px] shrink-0" />
                <div className="flex-1 min-w-0 flex flex-col border-l border-[#444]">
                    <div className="h-[15px] shrink-0 flex justify-center items-center text-[10px] font-semibold text-[#333]">
                        <span className="translate-x-[-3px]">Untitled</span>
                    </div>
                    <div className="h-[328px] shrink-0 flex border-r border-[#666]">
                        <VerticalTools />
                        <div className="w-[727px] shrink-0 relative flex justify-center pt-[12px] border border-[#40d0e0] bg-gradient-to-b from-[#2b5379] to-[#a0a1a5]">
                            <Beam />
                            <span className="absolute right-[3px] top-[3px] text-[8.75px] leading-[13px] text-[#e8e8e8] font-['Noto_Sans',sans-serif]">Loadcase 01; Delta-Alpha; St-Al</span>
                            <Triad />
                        </div>
                    </div>
                    <BottomTools />
                    <div className="h-[108px] mt-[4px] shrink-0 flex flex-col mr-[4px]">
                        <ResultForm />
                    </div>
                </div>
            </div>
            <div className={`h-[15px] shrink-0 flex items-center pl-[2px] text-[#555] ${dlg}`}>0 entities selected</div>
        </div>
    );
}
